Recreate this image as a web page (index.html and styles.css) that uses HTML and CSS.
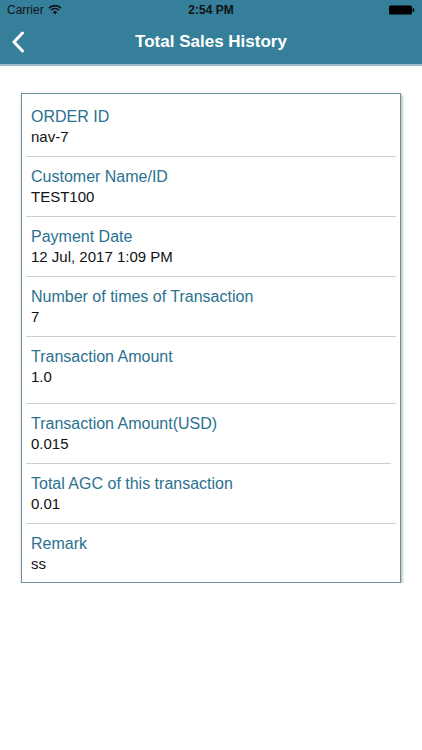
FILE: index.html
```html
<!DOCTYPE html>
<html>
<head>
<meta charset="utf-8">
<link rel="stylesheet" href="styles.css">
</head>
<body>
<header class="topbar">
  <div class="status">
    <div class="status-left">
      <span class="carrier">Carrier</span>
      <svg class="wifi" width="14" height="10" viewBox="0 0 14 10">
        <path d="M7 9.5 L4.8 7.1 A3.2 3.2 0 0 1 9.2 7.1 Z" fill="#111"/>
        <path d="M2.9 5.2 A5.8 5.8 0 0 1 11.1 5.2" stroke="#111" stroke-width="1.5" fill="none"/>
        <path d="M1 3.1 A8.6 8.6 0 0 1 13 3.1" stroke="#111" stroke-width="1.5" fill="none"/>
      </svg>
    </div>
    <div class="time">2:54 PM</div>
    <div class="status-right">
      <svg width="26" height="10" viewBox="0 0 26 10">
        <rect x="0" y="0.5" width="23" height="9" rx="1.5" fill="#000"/>
        <rect x="23.6" y="3.3" width="1.6" height="3.4" rx="0.5" fill="#000"/>
      </svg>
    </div>
  </div>
  <div class="nav">
    <svg class="back" width="14" height="22" viewBox="0 0 14 22">
      <path d="M11.5 2 L3 11 L11.5 20" stroke="#fff" stroke-width="3" fill="none" stroke-linecap="round" stroke-linejoin="round"/>
    </svg>
    <div class="title">Total Sales History</div>
  </div>
</header>
<main class="content">
  <section class="card">
    <div class="row row-first">
      <div class="label">ORDER ID</div>
      <div class="value">nav-7</div>
    </div>
    <div class="row">
      <div class="label">Customer Name/ID</div>
      <div class="value">TEST100</div>
    </div>
    <div class="row">
      <div class="label">Payment Date</div>
      <div class="value">12 Jul, 2017 1:09 PM</div>
    </div>
    <div class="row">
      <div class="label">Number of times of Transaction</div>
      <div class="value">7</div>
    </div>
    <div class="row row-tall">
      <div class="label">Transaction Amount</div>
      <div class="value">1.0</div>
    </div>
    <div class="row row-short-line">
      <div class="label">Transaction Amount(USD)</div>
      <div class="value">0.015</div>
    </div>
    <div class="row">
      <div class="label">Total AGC of this transaction</div>
      <div class="value">0.01</div>
    </div>
    <div class="row row-last">
      <div class="label">Remark</div>
      <div class="value">ss</div>
    </div>
  </section>
</main>
</body>
</html>
```
FILE: styles.css
```css
html, body {
  margin: 0;
  padding: 0;
  background: #ffffff;
  font-family: "Liberation Sans", Arial, sans-serif;
}

.topbar {
  background: #367f9b;
  border-bottom: 2px solid #9dbfcc;
  height: 64px;
  color: #fff;
}

.status {
  height: 20px;
  display: flex;
  align-items: center;
  justify-content: space-between;
  padding: 0 7px;
  font-size: 12px;
}

.status-left {
  display: flex;
  align-items: center;
  gap: 4px;
  width: 100px;
}

.carrier {
  color: #111;
}

.time {
  font-weight: bold;
  color: #111;
  font-size: 12px;
}

.status-right {
  width: 100px;
  display: flex;
  justify-content: flex-end;
}

.nav {
  height: 44px;
  display: flex;
  align-items: center;
  justify-content: center;
  position: relative;
}

.back {
  position: absolute;
  left: 11px;
  top: 11px;
}

.title {
  font-size: 17px;
  font-weight: bold;
  color: #fff;
}

.content {
  padding: 27px 21px 0 21px;
}

.card {
  width: 378px;
  border: 1px solid #6d8e9c;
  box-shadow: 1px 2px 3px rgba(0, 0, 0, 0.35);
  background: #fff;
}

.row {
  margin: 0 4px;
  padding: 10px 5px 10px 5px;
  border-bottom: 1px solid #cfcfcf;
  height: 39px;
}

.row-first {
  padding-top: 13px;
}

.row-tall {
  padding-bottom: 17px;
}

.row-short-line {
  margin-right: 9px;
}

.row-last {
  border-bottom: none;
  height: 38px;
}

.label {
  color: #2b7190;
  font-size: 16px;
  line-height: 20px;
}

.value {
  color: #111;
  font-size: 15px;
  line-height: 20px;
}
```
